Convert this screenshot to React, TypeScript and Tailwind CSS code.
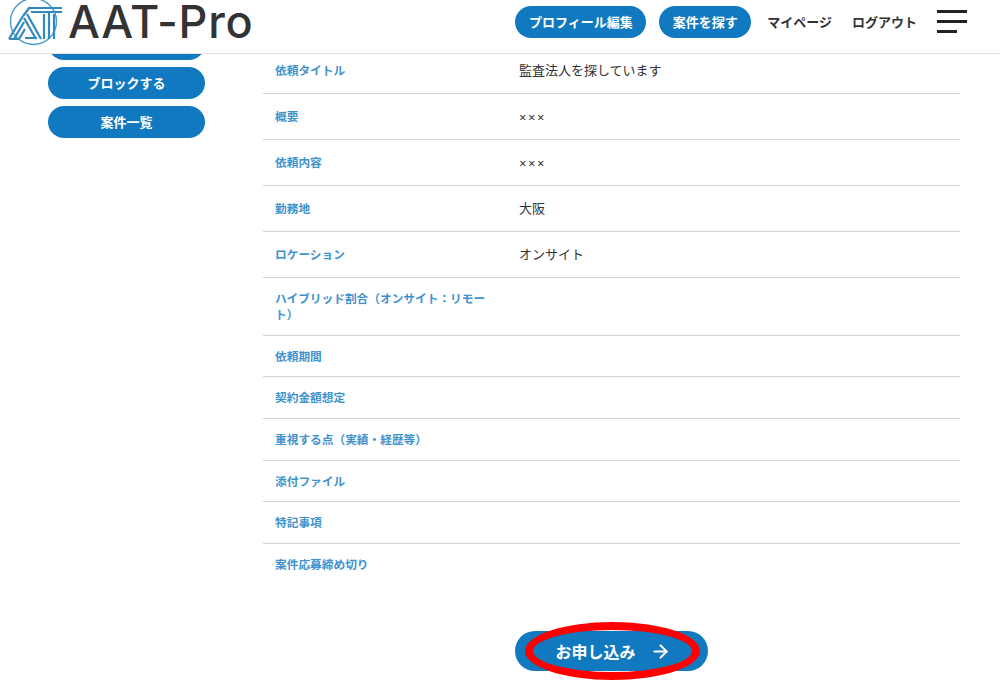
import { ArrowRight } from 'lucide-react'

const jp = '"Noto Sans CJK JP", "Noto Sans", sans-serif'

const rows: [string, string][] = [
  ['依頼タイトル', '監査法人を探しています'],
  ['概要', '×××'],
  ['依頼内容', '×××'],
  ['勤務地', '大阪'],
  ['ロケーション', 'オンサイト'],
  ['ハイブリッド割合（オンサイト：リモート）', ''],
  ['依頼期間', ''],
  ['契約金額想定', ''],
  ['重視する点（実績・経歴等）', ''],
  ['添付ファイル', ''],
  ['特記事項', ''],
  ['案件応募締め切り', ''],
]

function LogoMark() {
  return (
    <svg width="64" height="46" viewBox="0 0 64 46" className="shrink-0" fill="none">
      <circle cx="33.5" cy="21.5" r="23" stroke="#4b9bcb" strokeWidth="1.4" />
      <g stroke="#3189be" strokeWidth="2.2">
        <path d="M29 8h33M31 12h31" />
        <path d="M44 14v25M49 12v27M54 14v25" />
        <path d="M9 39 23 16M14 39 24 22M19 39 25 29" />
        <path d="M23 16 30 7" />
        <path d="M27 14 41 39M24 18 36 39" />
        <path d="M25 38h12M9 39h10" />
      </g>
    </svg>
  )
}

function Pill({ children }: { children?: string }) {
  return (
    <a className="flex h-8 items-center justify-center rounded-full bg-[#1179bf] px-[13.5px] text-[13px] font-bold text-white">
      {children}
    </a>
  )
}

export default function App() {
  return (
    <div className="flex h-[681px] w-[1000px] flex-col overflow-hidden bg-white text-[#333]" style={{ fontFamily: jp }}>
      <header className="z-10 flex h-[54px] shrink-0 items-start border-b border-[#e2e2e2] bg-white">
        <LogoMark />
        <span
          className="ml-[4px] text-[45px] leading-[44px] font-medium tracking-[0.7px] text-[#333]"
          style={{ fontFamily: 'Inter, sans-serif' }}
        >
          AAT-Pro
        </span>
        <nav className="ml-auto flex items-center pt-[6px]">
          <div className="flex gap-[13px]">
            <Pill>プロフィール編集</Pill>
            <Pill>案件を探す</Pill>
          </div>
          <a className="ml-4 text-[13px] font-bold">マイページ</a>
          <a className="ml-5 text-[13px] font-bold">ログアウト</a>
          <div className="mt-[-2px] mr-[33px] ml-[20px] flex w-[30px] flex-col gap-[7px]">
            <span className="h-[3px] w-[30px] bg-[#222]" />
            <span className="h-[3px] w-[30px] bg-[#222]" />
            <span className="h-[3px] w-[20px] bg-[#222]" />
          </div>
        </nav>
      </header>

      <main className="flex min-h-0 flex-1 overflow-hidden">
        <aside className="mt-[-26px] ml-12 flex w-[157px] shrink-0 flex-col gap-[7px]">
          <Pill />
          <Pill>ブロックする</Pill>
          <Pill>案件一覧</Pill>
        </aside>

        <section className="mt-[-6.4px] ml-[58px] w-[697px] shrink-0">
          <div>
            {rows.map(([label, value], i) => (
              <div
                key={label}
                className={`flex items-center ${i < rows.length - 1 ? 'border-b border-[#d4d4d4]' : 'border-b border-transparent'}`}
              >
                <div className="w-[244px] shrink-0 px-3 py-3 text-[11.7px] leading-[16.6px] font-bold text-[#3f93cd]">
                  {label}
                </div>
                {value === '×××' ? (
                  <div
                    className="px-3 pt-[13px] pb-[11px] text-[13px] leading-[21px] tracking-[1.6px]"
                    style={{ fontFamily: '"Noto Sans", sans-serif' }}
                  >
                    {value}
                  </div>
                ) : (
                  value && <div className="px-3 pt-[11px] pb-[13px] text-[13px] leading-[21px]">{value}</div>
                )}
              </div>
            ))}
          </div>

          <div className="mt-[46px] flex justify-center">
            <a className="relative ml-[-1px] flex h-10 w-[193px] items-center justify-center gap-[14px] rounded-full bg-[#1179bf] pl-[4px] text-base font-bold text-white">
              <span>お申し込み</span>
              <ArrowRight size={21} strokeWidth={2.4} />
              <span className="absolute top-[-9px] left-[10px] h-[58px] w-[175px] rounded-[50%] border-8 border-[#f00]" />
            </a>
          </div>
        </section>
      </main>
    </div>
  )
}
